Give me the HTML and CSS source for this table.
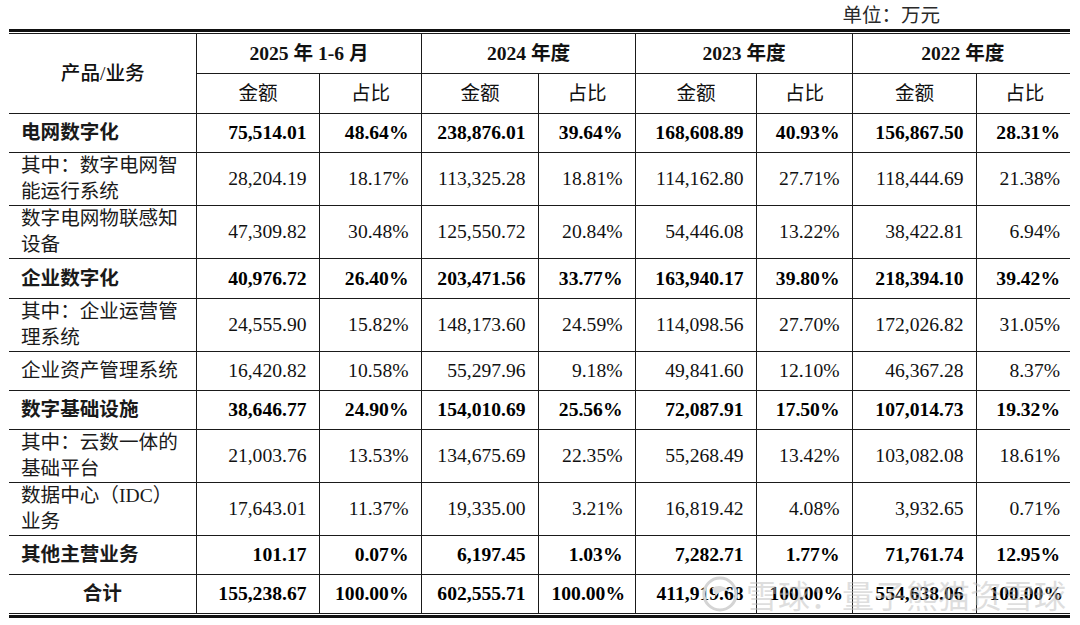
FILE: index.html
```html
<!DOCTYPE html>
<html lang="zh-CN">
<head>
<meta charset="utf-8">
<title>产品/业务收入构成</title>
<link rel="stylesheet" href="styles.css">
</head>
<body>
<div class="page">
  <div class="unit">单位：万元</div>
  <div class="frame">
    <table class="tbl">
      <colgroup>
        <col class="c0"><col class="c1"><col class="c2"><col class="c3"><col class="c4"><col class="c5"><col class="c6"><col class="c7"><col class="c8">
      </colgroup>
      <thead>
        <tr class="r40">
          <th rowspan="2" class="hd-name">产品/业务</th>
          <th colspan="2" class="hd-year">2025 年 1-6 月</th>
          <th colspan="2" class="hd-year">2024 年度</th>
          <th colspan="2" class="hd-year">2023 年度</th>
          <th colspan="2" class="hd-year">2022 年度</th>
        </tr>
        <tr class="r40">
          <th class="hd-sub">金额</th><th class="hd-sub">占比</th>
          <th class="hd-sub">金额</th><th class="hd-sub">占比</th>
          <th class="hd-sub">金额</th><th class="hd-sub">占比</th>
          <th class="hd-sub">金额</th><th class="hd-sub">占比</th>
        </tr>
      </thead>
      <tbody>
        <tr class="r39 bold">
          <td class="name">电网数字化</td>
          <td>75,514.01</td><td>48.64%</td><td>238,876.01</td><td>39.64%</td><td>168,608.89</td><td>40.93%</td><td>156,867.50</td><td>28.31%</td>
        </tr>
        <tr class="r53">
          <td class="name">其中：数字电网智<br>能运行系统</td>
          <td>28,204.19</td><td>18.17%</td><td>113,325.28</td><td>18.81%</td><td>114,162.80</td><td>27.71%</td><td>118,444.69</td><td>21.38%</td>
        </tr>
        <tr class="r53">
          <td class="name">数字电网物联感知<br>设备</td>
          <td>47,309.82</td><td>30.48%</td><td>125,550.72</td><td>20.84%</td><td>54,446.08</td><td>13.22%</td><td>38,422.81</td><td>6.94%</td>
        </tr>
        <tr class="r40 bold">
          <td class="name">企业数字化</td>
          <td>40,976.72</td><td>26.40%</td><td>203,471.56</td><td>33.77%</td><td>163,940.17</td><td>39.80%</td><td>218,394.10</td><td>39.42%</td>
        </tr>
        <tr class="r53">
          <td class="name">其中：企业运营管<br>理系统</td>
          <td>24,555.90</td><td>15.82%</td><td>148,173.60</td><td>24.59%</td><td>114,098.56</td><td>27.70%</td><td>172,026.82</td><td>31.05%</td>
        </tr>
        <tr class="r39">
          <td class="name">企业资产管理系统</td>
          <td>16,420.82</td><td>10.58%</td><td>55,297.96</td><td>9.18%</td><td>49,841.60</td><td>12.10%</td><td>46,367.28</td><td>8.37%</td>
        </tr>
        <tr class="r39 bold">
          <td class="name">数字基础设施</td>
          <td>38,646.77</td><td>24.90%</td><td>154,010.69</td><td>25.56%</td><td>72,087.91</td><td>17.50%</td><td>107,014.73</td><td>19.32%</td>
        </tr>
        <tr class="r53">
          <td class="name">其中：云数一体的<br>基础平台</td>
          <td>21,003.76</td><td>13.53%</td><td>134,675.69</td><td>22.35%</td><td>55,268.49</td><td>13.42%</td><td>103,082.08</td><td>18.61%</td>
        </tr>
        <tr class="r53">
          <td class="name">数据中心（IDC）<br>业务</td>
          <td>17,643.01</td><td>11.37%</td><td>19,335.00</td><td>3.21%</td><td>16,819.42</td><td>4.08%</td><td>3,932.65</td><td>0.71%</td>
        </tr>
        <tr class="r39 bold">
          <td class="name">其他主营业务</td>
          <td>101.17</td><td>0.07%</td><td>6,197.45</td><td>1.03%</td><td>7,282.71</td><td>1.77%</td><td>71,761.74</td><td>12.95%</td>
        </tr>
        <tr class="r39 bold">
          <td class="name total">合计</td>
          <td>155,238.67</td><td>100.00%</td><td>602,555.71</td><td>100.00%</td><td>411,919.68</td><td>100.00%</td><td>554,638.06</td><td>100.00%</td>
        </tr>
      </tbody>
    </table>
  </div>
  <div class="watermark">
    <svg class="wm-logo" width="44" height="40" viewBox="0 0 44 40" aria-hidden="true">
      <circle cx="20" cy="20" r="16" fill="none" stroke="#d4d4d4" stroke-width="3"/>
      <path d="M12 14 C18 10 26 12 30 18 C26 16 20 16 16 22 Z" fill="#dcdcdc"/>
    </svg>
    <span class="wm-text">雪球：量子熊猫资雪球</span>
  </div>
</div>
</body>
</html>
```

FILE: styles.css
```css
html, body {
  margin: 0;
  padding: 0;
  background: #ffffff;
}

body {
  font-family: "Liberation Serif", "Noto Sans CJK SC", serif;
  color: #000000;
}

.page {
  position: relative;
  width: 1061px;
  padding-left: 9px;
}

.unit {
  height: 29px;
  box-sizing: border-box;
  padding: 4px 130px 0 0;
  text-align: right;
  font-size: 19.5px;
  line-height: 24px;
  color: #2a2a2a;
}

.frame {
  border-top: 3px solid #111;
  border-bottom: 3px solid #111;
  padding: 1px 0;
}

.tbl {
  width: 1061px;
  table-layout: fixed;
  border-collapse: collapse;
}

.c0 { width: 187px; }
.c1 { width: 123px; }
.c2 { width: 102px; }
.c3 { width: 117px; }
.c4 { width: 97px; }
.c5 { width: 121px; }
.c6 { width: 96px; }
.c7 { width: 124px; }
.c8 { width: 94px; }

.tbl th,
.tbl td {
  border: 1px solid #1a1a1a;
  padding: 0 12px 0 13px;
  font-size: 19.6px;
  line-height: 26px;
  white-space: nowrap;
  vertical-align: middle;
}

.tbl tr > :first-child { border-left: none; }
.tbl tr > :last-child { border-right: none; padding-right: 10px; }

.tbl td { text-align: right; color: #111; }
.tbl td.name { text-align: left; padding-left: 12px; color: #1a1a1a; }
.tbl td.total { text-align: center; font-weight: 500; }

.r39 { height: 39px; }
.r40 { height: 40px; }
.r53 { height: 53px; }

.tbl th {
  text-align: center;
  font-weight: 400;
  color: #111;
}

.tbl th.hd-year { font-weight: 700; }
.tbl th.hd-name { font-weight: 500; }
.tbl th.hd-sub { font-weight: 400; }

.bold td { font-weight: 700; color: #000; }
.bold td.name { font-weight: 700; }

.watermark {
  position: absolute;
  left: 700px;
  top: 574px;
  display: flex;
  align-items: center;
  gap: 2px;
  pointer-events: none;
}

.wm-text {
  font-family: "Noto Sans CJK SC", sans-serif;
  font-size: 32px;
  line-height: 38px;
  color: rgba(190, 190, 190, 0.5);
  white-space: nowrap;
}
```
